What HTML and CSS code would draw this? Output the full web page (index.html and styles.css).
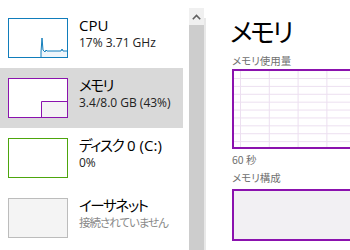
FILE: index.html
```html
<!DOCTYPE html>
<html lang="ja">
<head>
<meta charset="utf-8">
<link rel="stylesheet" href="styles.css">
</head>
<body>
<div class="app">
  <div class="list">
    <div class="item">
      <div class="thumb cpu">
        <svg width="58" height="38" viewBox="0 0 58 38">
          <path d="M32 33 L33 19 L34 31 L36 33 L37 31 L38 32 L52 32 L53 30 L54 32 L58 32 L58 38 L32 38 Z" fill="#eef5fa"/>
          <path d="M32 38 L32 33 L33 19 L34 31 L36 33 L37 31 L38 32 L52 32 L53 30 L54 32 L58 32" fill="none" stroke="#117dbb" stroke-width="1"/>
        </svg>
      </div>
      <div class="info">
        <div class="name">CPU</div>
        <div class="sub">17% 3.71 GHz</div>
      </div>
    </div>
    <div class="item selected">
      <div class="thumb mem">
        <svg width="58" height="38" viewBox="0 0 58 38">
          <path d="M32 38 L32 22 L58 22 L58 38 Z" fill="#f4f2f4"/>
          <path d="M32.5 38 L32.5 22.5 L58 22.5" fill="none" stroke="#8b12ae" stroke-width="1"/>
        </svg>
      </div>
      <div class="info">
        <div class="name ja">メモリ</div>
        <div class="sub">3.4/8.0 GB (43%)</div>
      </div>
    </div>
    <div class="item">
      <div class="thumb disk"></div>
      <div class="info">
        <div class="name ja">ディスク<span class="latin"> 0 (C:)</span></div>
        <div class="sub">0%</div>
      </div>
    </div>
    <div class="item">
      <div class="thumb eth"></div>
      <div class="info">
        <div class="name ja">イーサネット</div>
        <div class="sub muted">接続されていません</div>
      </div>
    </div>
  </div>
  <div class="scroll">
    <div class="scroll-btn">
      <svg width="9" height="6" viewBox="0 0 9 6"><path d="M0.8 5.2 L4.5 1.5 L8.2 5.2" fill="none" stroke="#606060" stroke-width="1.6"/></svg>
    </div>
    <div class="scroll-thumb"></div>
  </div>
  <div class="edge"></div>
  <div class="detail">
    <div class="title">メモリ</div>
    <div class="label">メモリ使用量</div>
    <div class="chart"></div>
    <div class="label axis">60 秒</div>
    <div class="label">メモリ構成</div>
    <div class="compose"></div>
  </div>
</div>
</body>
</html>
```

FILE: styles.css
```css
* { box-sizing: border-box; }
html, body { margin: 0; padding: 0; background: #fff; overflow: hidden; }
body {
  width: 350px; height: 250px;
  font-family: "Open Sans", "Noto Sans CJK JP", sans-serif;
  font-feature-settings: "palt";
  color: #000;
}
.app { display: flex; height: 250px; }
.list { width: 183px; flex: none; padding-top: 8px; }
.item { height: 60px; display: flex; align-items: flex-start; padding: 10px 0 0 8px; }
.item.selected { background: #d9d9d9; }
.thumb { width: 60px; height: 40px; flex: none; border: 1px solid; background: #fff; }
.thumb svg { display: block; }
.cpu { border-color: #117dbb; }
.mem { border-color: #8b12ae; }
.disk { border-color: #4da60c; }
.eth { border-color: #bcbcbc; background: #f4f4f4; }
.info { margin-left: 11px; margin-top: -2px; }
.name { font-size: 15px; line-height: 19px; white-space: nowrap; }
.name.ja { font-size: 14.5px; letter-spacing: -1.4px; }
.name .latin { letter-spacing: 0; font-size: 15px; }
.sub { font-size: 12px; line-height: 16px; color: #222; white-space: nowrap; }
.sub.muted { color: #8a8a8a; font-size: 11.5px; letter-spacing: -1px; }
.scroll { width: 15px; flex: none; margin-left: 6px; margin-top: 8px; display: flex; flex-direction: column; }
.scroll-btn { height: 17px; background: #f0f0f0; display: flex; align-items: center; justify-content: center; }
.scroll-thumb { flex: 1; background: #cdcdcd; }
.edge { width: 2px; flex: none; margin-top: 18px; background: #e8e8e8; }
.detail { flex: 1; padding-left: 26px; padding-top: 14px; min-width: 0; }
.title { font-family: "Noto Sans CJK JP", sans-serif; font-size: 26px; line-height: 34px; margin-left: -2px; letter-spacing: -2.5px; }
.label { font-family: "Noto Sans CJK JP", sans-serif; font-size: 10.5px; line-height: 14px; color: #707070; white-space: nowrap; }
.title + .label { margin-top: 6px; }
.chart {
  width: 160px; height: 80px; margin-top: 1px;
  border: 2px solid #8b12ae;
  background-color: #fff;
  background-image:
    linear-gradient(to right, #ecdff0 1px, transparent 1px),
    linear-gradient(to bottom, #ecdff0 1px, transparent 1px);
  background-size: 28.8px 100%, 100% 7.9px;
  background-position: 6px 0, 0 7px;
}
.axis { margin-top: 4px; margin-bottom: 4px; }
.compose { width: 160px; height: 52px; margin-top: 4px; border: 2px solid #8b12ae; background: #f2f0f3; }
```
